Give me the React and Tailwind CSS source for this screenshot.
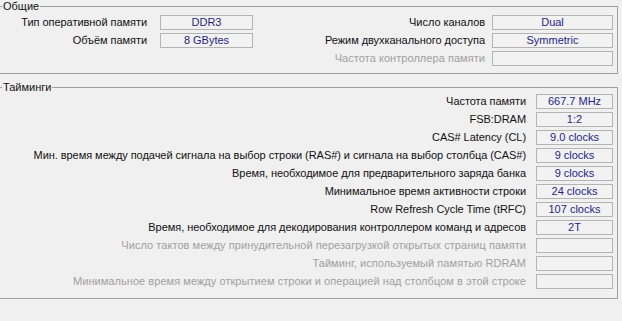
import React from "react";

const general = {
  left: [
    { label: "Тип оперативной памяти", value: "DDR3" },
    { label: "Объём памяти", value: "8 GBytes" },
  ],
  right: [
    { label: "Число каналов", value: "Dual" },
    { label: "Режим двухканального доступа", value: "Symmetric" },
    { label: "Частота контроллера памяти", value: "", disabled: true },
  ],
};

const timings = [
  { label: "Частота памяти", value: "667.7 MHz" },
  { label: "FSB:DRAM", value: "1:2" },
  { label: "CAS# Latency (CL)", value: "9.0 clocks" },
  { label: "Мин. время между подачей сигнала на выбор строки (RAS#) и сигнала на выбор столбца (CAS#)", value: "9 clocks" },
  { label: "Время, необходимое для предварительного заряда банка", value: "9 clocks" },
  { label: "Минимальное время активности строки", value: "24 clocks" },
  { label: "Row Refresh Cycle Time (tRFC)", value: "107 clocks" },
  { label: "Время, необходимое для декодирования контроллером команд и адресов", value: "2T" },
  { label: "Число тактов между принудительной перезагрузкой открытых страниц памяти", value: "", disabled: true },
  { label: "Тайминг, используемый памятью RDRAM", value: "", disabled: true },
  { label: "Минимальное время между открытием строки и операцией над столбцом в этой строке", value: "", disabled: true },
];

const Row = ({ label, value, disabled, gap, width }) => (
  <div className={`flex items-center justify-end h-[15px] ${gap}`}>
    <span
      className={
        disabled
          ? "text-[#a0a0a0] tracking-[0.05px] whitespace-nowrap"
          : "text-[#111] tracking-[-0.05px] whitespace-nowrap"
      }
    >
      {label}
    </span>
    <div
      className={`${width} h-[15px] border border-[#b4b4b4] bg-[#f2f2f2] flex items-center justify-center text-[#1e1e8c] leading-[13px]`}
    >
      {value}
    </div>
  </div>
);

const GroupTitle = ({ children }) => (
  <div className="-mt-[7px] ml-[2px] h-[13px] w-fit bg-[#f0f0f0] px-[1px] leading-[13px] text-[#111]">
    {children}
  </div>
);

export default function App() {
  return (
    <div
      className="w-[622px] h-[321px] bg-[#f0f0f0] text-[11px] leading-[13px] overflow-hidden"
      style={{ fontFamily: '"Liberation Sans", Arial, sans-serif' }}
    >
      <div className="h-[6px]" />
      <div className="mr-[4px] h-[68px] border-t border-r border-b border-[#a0a0a0]">
        <GroupTitle>Общие</GroupTitle>
        <div className="mt-[2px] flex">
          <div className="w-[253px] flex flex-col gap-[3px]">
            {general.left.map((r) => (
              <Row key={r.label} {...r} gap="gap-[13px]" width="w-[93px]" />
            ))}
          </div>
          <div className="flex-1 pr-[4px] flex flex-col gap-[3px]">
            {general.right.map((r) => (
              <Row key={r.label} {...r} gap="gap-[7px]" width="w-[121px]" />
            ))}
          </div>
        </div>
      </div>

      <div className="h-[13px]" />
      <div className="mr-[4px] h-[212px] border-t border-r border-b border-[#a0a0a0]">
        <GroupTitle>Тайминги</GroupTitle>
        <div className="pr-[4px] flex flex-col gap-[3px]">
          {timings.map((r) => (
            <Row key={r.label} {...r} gap="gap-[10px]" width="w-[77px]" />
          ))}
        </div>
      </div>
    </div>
  );
}
